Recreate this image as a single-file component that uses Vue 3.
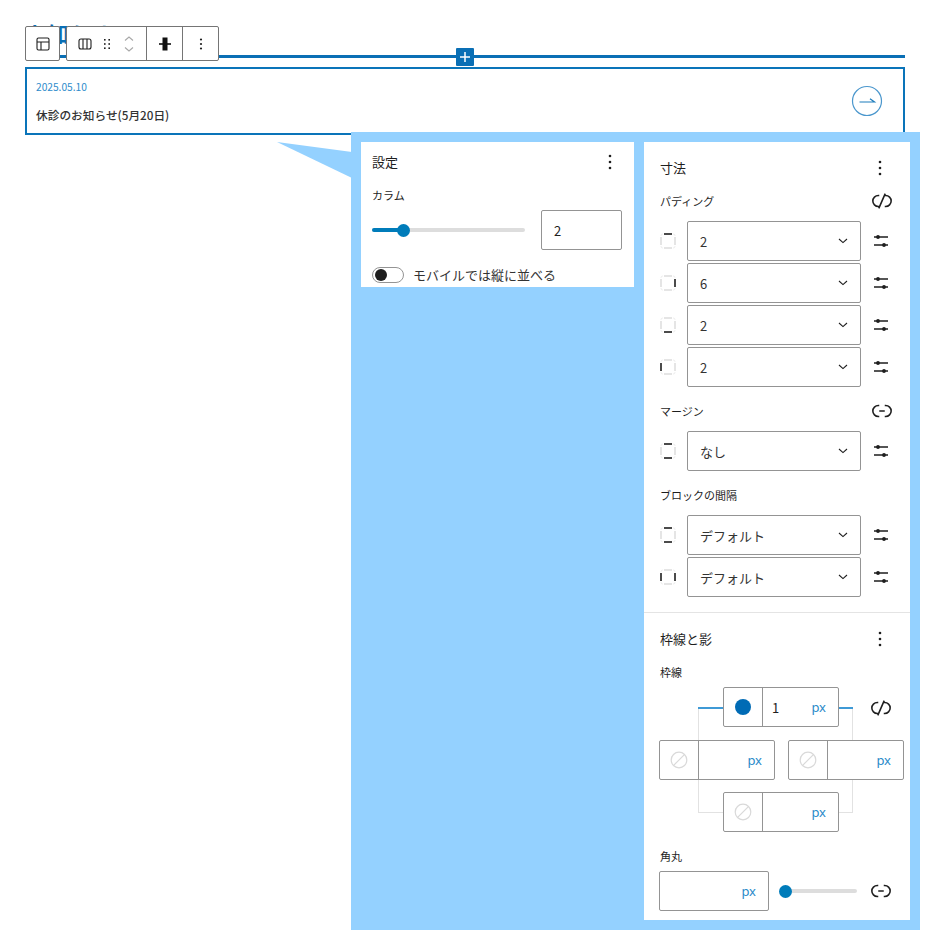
<script setup>
const paddingRows = [
  { sides: ['top'], value: '2' },
  { sides: ['right'], value: '6' },
  { sides: ['bottom'], value: '2' },
  { sides: ['left'], value: '2' },
]
const marginRows = [{ sides: ['top', 'bottom'], value: 'なし' }]
const gapRows = [
  { sides: ['top', 'bottom'], value: 'デフォルト' },
  { sides: ['left', 'right'], value: 'デフォルト' },
]
const sideLines = {
  top: 'M4 1H12',
  bottom: 'M4 15H12',
  left: 'M1 4V12',
  right: 'M15 4V12',
}
const sideNames = ['top', 'right', 'bottom', 'left']
</script>

<template>
  <div class="page">
    <h2 class="heading">お知らせ</h2>
    <div class="inserter">
      <span class="plus">
        <svg width="12" height="12" viewBox="0 0 12 12"><path d="M6 1V11M1 6H11" stroke="#fff" stroke-width="1.5" /></svg>
      </span>
    </div>
    <div class="post">
      <div class="post-text">
        <div class="date">2025.05.10</div>
        <div class="title">休診のお知らせ(5月20日)</div>
      </div>
      <svg class="arrow" width="32" height="32" viewBox="0 0 32 32" fill="none">
        <circle cx="16" cy="16" r="14.5" stroke="#4b97cd" stroke-width="1.2" />
        <path d="M8.5 17H23.5L19 13.8" stroke="#1d7cbc" stroke-width="1.2" />
      </svg>
    </div>

    <div class="toolbar">
      <div class="tool-group">
        <button class="tool wide35">
          <svg width="14" height="14" viewBox="0 0 14 14" fill="none" stroke="#1e1e1e" stroke-width="1.1">
            <rect x="1" y="1" width="12" height="12" rx="1.5" /><path d="M1 5H13M5 5V13" />
          </svg>
        </button>
      </div>
      <div class="tool-group">
        <div class="tool movers">
          <svg width="14" height="12" viewBox="0 0 14 12" fill="none" stroke="#1e1e1e" stroke-width="1.1">
            <rect x="1" y="1" width="12" height="10" rx="2" /><path d="M5 1V11M9 1V11" />
          </svg>
          <svg class="drag" width="8" height="12" viewBox="0 0 8 12" fill="#1e1e1e">
            <rect x="1" y="1" width="1.6" height="1.6" /><rect x="5.4" y="1" width="1.6" height="1.6" />
            <rect x="1" y="5.2" width="1.6" height="1.6" /><rect x="5.4" y="5.2" width="1.6" height="1.6" />
            <rect x="1" y="9.4" width="1.6" height="1.6" /><rect x="5.4" y="9.4" width="1.6" height="1.6" />
          </svg>
          <svg class="chev" width="10" height="16" viewBox="0 0 10 16" fill="none" stroke="#a8a8a8" stroke-width="1.1">
            <path d="M1 4.5L5 1L9 4.5M1 11.5L5 15L9 11.5" />
          </svg>
        </div>
        <button class="tool wide36 sep">
          <svg width="14" height="14" viewBox="0 0 14 14">
            <rect x="4.5" y="0.5" width="5" height="13" fill="#111" /><rect x="1" y="6.2" width="12" height="1.6" fill="#111" />
          </svg>
        </button>
        <button class="tool wide36 sep">
          <svg width="4" height="14" viewBox="0 0 4 14" fill="#1e1e1e">
            <circle cx="2" cy="2.5" r="1.1" /><circle cx="2" cy="7" r="1.1" /><circle cx="2" cy="11.5" r="1.1" />
          </svg>
        </button>
      </div>
    </div>

    <svg class="callout" width="76" height="40" viewBox="0 0 76 40">
      <polygon points="0,1 75,11 75,37" fill="#94d1ff" />
    </svg>

    <div class="overlay">
      <section class="panel settings">
        <div class="panel-head">
          <h3>設定</h3>
          <svg class="kebab" width="4" height="16" viewBox="0 0 4 16" fill="#1e1e1e">
            <circle cx="2" cy="2" r="1.3" /><circle cx="2" cy="8" r="1.3" /><circle cx="2" cy="14" r="1.3" />
          </svg>
        </div>
        <div class="label col-label">カラム</div>
        <div class="col-row">
          <div class="range range-col"><span class="fill"></span><span class="thumb"></span></div>
          <div class="number">2</div>
        </div>
        <div class="toggle-row">
          <span class="toggle"><span class="knob"></span></span>
          <span class="toggle-label">モバイルでは縦に並べる</span>
        </div>
      </section>

      <section class="panel dims">
        <div class="block-part">
          <div class="panel-head">
            <h3>寸法</h3>
            <svg class="kebab" width="4" height="16" viewBox="0 0 4 16" fill="#1e1e1e">
              <circle cx="2" cy="2" r="1.3" /><circle cx="2" cy="8" r="1.3" /><circle cx="2" cy="14" r="1.3" />
            </svg>
          </div>

          <div class="label-row first">
            <span class="label">パディング</span>
            <svg class="link" width="22" height="22" viewBox="0 0 24 24" fill="none" stroke="#1e1e1e" stroke-width="1.7">
              <path d="M9 6H8a6 6 0 0 0 0 12h1M15 6h1a6 6 0 0 1 0 12h-1M15.5 4L8.5 20" />
            </svg>
          </div>
          <div class="rows">
            <div v-for="(row, i) in paddingRows" :key="'p' + i" class="row">
              <svg class="side" width="16" height="16" viewBox="0 0 16 16" fill="none">
                <path d="M1 2.8A1.8 1.8 0 0 1 2.8 1M13.2 1A1.8 1.8 0 0 1 15 2.8M15 13.2A1.8 1.8 0 0 1 13.2 15M2.8 15A1.8 1.8 0 0 1 1 13.2" stroke="#ececec" stroke-width="1" />
                <path v-for="name in sideNames" :key="name" :d="sideLines[name]" :stroke="row.sides.includes(name) ? '#1e1e1e' : '#d4d4d4'" :stroke-width="row.sides.includes(name) ? 1.6 : 1.2" />
              </svg>
              <div class="select">
                <span>{{ row.value }}</span>
                <svg width="10" height="6" viewBox="0 0 10 6" fill="none" stroke="#1e1e1e" stroke-width="1.1"><path d="M1 1L5 4.6L9 1" /></svg>
              </div>
              <svg class="tune" width="16" height="14" viewBox="0 0 16 14" fill="none" stroke="#1e1e1e" stroke-width="1.3">
                <path d="M1 3H15M1 11H15" /><circle cx="5" cy="3" r="1.9" fill="#1e1e1e" stroke="none" /><circle cx="11" cy="11" r="1.9" fill="#1e1e1e" stroke="none" />
              </svg>
            </div>
          </div>

          <div class="label-row margin">
            <span class="label">マージン</span>
            <svg class="link" width="22" height="22" viewBox="0 0 24 24" fill="none" stroke="#1e1e1e" stroke-width="1.7">
              <path d="M9 6H8a6 6 0 0 0 0 12h1M15 6h1a6 6 0 0 1 0 12h-1M9 12h6" />
            </svg>
          </div>
          <div class="rows">
            <div v-for="(row, i) in marginRows" :key="'m' + i" class="row">
              <svg class="side" width="16" height="16" viewBox="0 0 16 16" fill="none">
                <path d="M1 2.8A1.8 1.8 0 0 1 2.8 1M13.2 1A1.8 1.8 0 0 1 15 2.8M15 13.2A1.8 1.8 0 0 1 13.2 15M2.8 15A1.8 1.8 0 0 1 1 13.2" stroke="#ececec" stroke-width="1" />
                <path v-for="name in sideNames" :key="name" :d="sideLines[name]" :stroke="row.sides.includes(name) ? '#1e1e1e' : '#d4d4d4'" :stroke-width="row.sides.includes(name) ? 1.6 : 1.2" />
              </svg>
              <div class="select">
                <span>{{ row.value }}</span>
                <svg width="10" height="6" viewBox="0 0 10 6" fill="none" stroke="#1e1e1e" stroke-width="1.1"><path d="M1 1L5 4.6L9 1" /></svg>
              </div>
              <svg class="tune" width="16" height="14" viewBox="0 0 16 14" fill="none" stroke="#1e1e1e" stroke-width="1.3">
                <path d="M1 3H15M1 11H15" /><circle cx="5" cy="3" r="1.9" fill="#1e1e1e" stroke="none" /><circle cx="11" cy="11" r="1.9" fill="#1e1e1e" stroke="none" />
              </svg>
            </div>
          </div>

          <div class="label-row gap">
            <span class="label">ブロックの間隔</span>
          </div>
          <div class="rows">
            <div v-for="(row, i) in gapRows" :key="'g' + i" class="row">
              <svg class="side" width="16" height="16" viewBox="0 0 16 16" fill="none">
                <path d="M1 2.8A1.8 1.8 0 0 1 2.8 1M13.2 1A1.8 1.8 0 0 1 15 2.8M15 13.2A1.8 1.8 0 0 1 13.2 15M2.8 15A1.8 1.8 0 0 1 1 13.2" stroke="#ececec" stroke-width="1" />
                <path v-for="name in sideNames" :key="name" :d="sideLines[name]" :stroke="row.sides.includes(name) ? '#1e1e1e' : '#d4d4d4'" :stroke-width="row.sides.includes(name) ? 1.6 : 1.2" />
              </svg>
              <div class="select">
                <span>{{ row.value }}</span>
                <svg width="10" height="6" viewBox="0 0 10 6" fill="none" stroke="#1e1e1e" stroke-width="1.1"><path d="M1 1L5 4.6L9 1" /></svg>
              </div>
              <svg class="tune" width="16" height="14" viewBox="0 0 16 14" fill="none" stroke="#1e1e1e" stroke-width="1.3">
                <path d="M1 3H15M1 11H15" /><circle cx="5" cy="3" r="1.9" fill="#1e1e1e" stroke="none" /><circle cx="11" cy="11" r="1.9" fill="#1e1e1e" stroke="none" />
              </svg>
            </div>
          </div>
        </div>

        <div class="block-part border-part">
          <div class="panel-head">
            <h3>枠線と影</h3>
            <svg class="kebab" width="4" height="16" viewBox="0 0 4 16" fill="#1e1e1e">
              <circle cx="2" cy="2" r="1.3" /><circle cx="2" cy="8" r="1.3" /><circle cx="2" cy="14" r="1.3" />
            </svg>
          </div>
          <div class="label border-label">枠線</div>

          <div class="border-box">
            <span class="conn conn-tl"></span>
            <span class="conn conn-tr"></span>
            <span class="conn conn-bl"></span>
            <span class="conn conn-br"></span>
            <span class="conn-blue blue-l"></span>
            <span class="conn-blue blue-r"></span>

            <div class="bc-line center">
              <div class="bc">
                <span class="bc-swatch"><i class="dot"></i></span>
                <span class="bc-val"><b>1</b><em>px</em></span>
              </div>
              <svg class="link bc-link" width="22" height="22" viewBox="0 0 24 24" fill="none" stroke="#1e1e1e" stroke-width="1.7">
                <path d="M9 6H8a6 6 0 0 0 0 12h1M15 6h1a6 6 0 0 1 0 12h-1M15.5 4L8.5 20" />
              </svg>
            </div>
            <div class="bc-line between">
              <div v-for="n in 2" :key="n" class="bc">
                <span class="bc-swatch">
                  <svg width="18" height="18" viewBox="0 0 18 18" fill="none" stroke="#d9d9d9" stroke-width="1.2"><circle cx="9" cy="9" r="7.8" /><path d="M3.6 14.4L14.4 3.6" /></svg>
                </span>
                <span class="bc-val"><b></b><em>px</em></span>
              </div>
            </div>
            <div class="bc-line center">
              <div class="bc">
                <span class="bc-swatch">
                  <svg width="18" height="18" viewBox="0 0 18 18" fill="none" stroke="#d9d9d9" stroke-width="1.2"><circle cx="9" cy="9" r="7.8" /><path d="M3.6 14.4L14.4 3.6" /></svg>
                </span>
                <span class="bc-val"><b></b><em>px</em></span>
              </div>
            </div>
          </div>

          <div class="label radius-label">角丸</div>
          <div class="radius-row">
            <div class="radius-input"><em>px</em></div>
            <div class="range range-radius"><span class="thumb"></span></div>
            <svg class="link radius-link" width="22" height="22" viewBox="0 0 24 24" fill="none" stroke="#1e1e1e" stroke-width="1.7">
              <path d="M9 6H8a6 6 0 0 0 0 12h1M15 6h1a6 6 0 0 1 0 12h-1M9 12h6" />
            </svg>
          </div>
        </div>
      </section>
    </div>
  </div>
</template>

<style scoped>
.page {
  position: relative;
  width: 934px;
  height: 944px;
  background: #fff;
  overflow: hidden;
  font-family: "Noto Sans CJK JP", "Noto Sans", sans-serif;
  color: #1e1e1e;
  padding: 17px 29px 0 25px;
  box-sizing: border-box;
}
.heading {
  margin: 0 0 0 2px;
  height: 34px;
  font-size: 21px;
  line-height: 33px;
  font-weight: 700;
  color: #0a6fb5;
}
.inserter {
  position: relative;
  height: 3px;
  margin-top: 4px;
  background: #0a6fb5;
  display: flex;
  justify-content: center;
  align-items: center;
}
.plus {
  width: 18px;
  height: 18px;
  background: #0a6fb5;
  border-radius: 1px;
  display: flex;
  align-items: center;
  justify-content: center;
}
.post {
  margin-top: 9px;
  height: 68px;
  box-sizing: border-box;
  border: 2px solid #0a74b9;
  display: flex;
  align-items: center;
  justify-content: space-between;
  padding: 0 20px 0 9px;
}
.post-text {
  display: flex;
  flex-direction: column;
  gap: 12px;
}
.date {
  font-size: 10.2px;
  line-height: 16px;
  color: #2f8ccb;
}
.title {
  font-size: 11.7px;
  line-height: 16px;
  font-weight: 500;
  color: #333;
}

.toolbar {
  position: absolute;
  left: 25px;
  top: 26px;
  display: flex;
  gap: 6px;
}
.tool-group {
  display: flex;
  height: 35px;
  box-sizing: border-box;
  border: 1px solid #757575;
  border-radius: 2px;
  background: #fff;
}
.tool {
  padding: 0;
  border: 0;
  background: none;
  display: flex;
  align-items: center;
  justify-content: center;
  height: 33px;
}
.wide35 {
  width: 33px;
}
.wide36 {
  width: 36px;
}
.sep {
  border-left: 1px solid #757575;
}
.movers {
  width: 79px;
  justify-content: flex-start;
  padding-left: 11px;
  box-sizing: border-box;
}
.drag {
  margin-left: 11px;
}
.chev {
  margin-left: 13px;
}

.callout {
  position: absolute;
  left: 277px;
  top: 141px;
}
.overlay {
  position: absolute;
  left: 351px;
  top: 132px;
  width: 569px;
  height: 798px;
  background: #94d1ff;
  padding: 10px;
  box-sizing: border-box;
  display: flex;
  align-items: flex-start;
  gap: 10px;
}
.panel {
  background: #fff;
}
.settings {
  width: 273px;
  height: 145px;
  padding: 0 12px 0 11px;
  box-sizing: border-box;
  flex: none;
}
.dims {
  width: 266px;
  height: 778px;
  flex: none;
}
.block-part {
  padding: 0 16px;
}
.border-part {
  border-top: 1px solid #e4e4e4;
  margin-top: 15px;
  padding-right: 0;
}
.panel-head {
  display: flex;
  align-items: center;
  justify-content: space-between;
}
.panel-head h3 {
  margin: 0;
  font-size: 13px;
  line-height: 20px;
  font-weight: 400;
}
.settings .panel-head {
  height: 40px;
  padding-right: 10px;
}
.dims .panel-head {
  height: 52px;
  padding-right: 12px;
}
.kebab {
  display: block;
}
.label {
  font-size: 11px;
  line-height: 16px;
  font-weight: 400;
}
.col-label {
  margin-top: 5px;
}
.col-row {
  display: flex;
  align-items: center;
  justify-content: space-between;
  margin-top: 7px;
}
.range {
  position: relative;
  height: 4px;
  border-radius: 2px;
  background: #ddd;
}
.range-col {
  width: 153px;
}
.fill {
  position: absolute;
  left: 0;
  top: 0;
  height: 4px;
  width: 31px;
  border-radius: 2px;
  background: #007cba;
}
.thumb {
  position: absolute;
  width: 13px;
  height: 13px;
  border-radius: 50%;
  background: #007cba;
  top: -4.5px;
  left: 25px;
}
.number {
  width: 81px;
  height: 40px;
  box-sizing: border-box;
  border: 1px solid #949494;
  border-radius: 2px;
  padding-left: 12px;
  display: flex;
  align-items: center;
  font-size: 13px;
}
.toggle-row {
  margin-top: 16px;
  display: flex;
  align-items: center;
  gap: 9px;
}
.toggle {
  width: 32px;
  height: 16px;
  box-sizing: border-box;
  border: 1px solid #949494;
  border-radius: 8px;
  display: flex;
  align-items: center;
  padding-left: 2px;
}
.knob {
  width: 12px;
  height: 12px;
  border-radius: 50%;
  background: #1e1e1e;
}
.toggle-label {
  font-size: 13px;
  line-height: 18px;
  color: #333;
}

.label-row {
  display: flex;
  align-items: center;
  justify-content: space-between;
  height: 20px;
  padding-right: 1px;
}
.label-row.first {
  margin-top: -3px;
}
.label-row.margin {
  margin-top: 14px;
}
.label-row.gap {
  margin-top: 14px;
}
.link {
  display: block;
}
.rows {
  margin-top: 10px;
  display: flex;
  flex-direction: column;
  gap: 2px;
}
.row {
  display: flex;
  align-items: center;
  height: 40px;
}
.side {
  flex: none;
  margin-right: 11px;
}
.select {
  width: 174px;
  height: 40px;
  box-sizing: border-box;
  border: 1px solid #949494;
  border-radius: 2px;
  padding: 0 12px 0 12px;
  display: flex;
  align-items: center;
  justify-content: space-between;
  font-size: 13px;
  color: #333;
  flex: none;
}
.tune {
  margin-left: 12px;
  flex: none;
}
.border-label {
  margin-top: 0;
  height: 16px;
}
.border-part .panel-head {
  height: 51px;
  padding-right: 28px;
}
.border-box {
  position: relative;
  width: 245px;
  margin: 7px 0 0 -1px;
  display: flex;
  flex-direction: column;
  gap: 12px;
}
.bc-line {
  position: relative;
  display: flex;
  height: 40px;
}
.bc-line.center {
  justify-content: flex-start;
  padding-left: 64px;
}
.bc-line.between {
  justify-content: space-between;
  margin-top: 1px;
}
.bc {
  position: relative;
  width: 116px;
  height: 40px;
  box-sizing: border-box;
  border: 1px solid #949494;
  border-radius: 2px;
  display: flex;
  background: #fff;
}
.bc-swatch {
  width: 39px;
  box-sizing: border-box;
  border-right: 1px solid #949494;
  display: flex;
  align-items: center;
  justify-content: center;
  flex: none;
}
.dot {
  width: 16px;
  height: 16px;
  border-radius: 50%;
  background: #006bb5;
}
.bc-val {
  flex: 1;
  display: flex;
  align-items: center;
  justify-content: space-between;
  padding: 0 12px 0 9px;
  font-size: 13px;
}
.bc-val b {
  font-weight: 400;
}
em {
  font-style: normal;
  font-size: 13px;
  color: #2a8ac9;
  font-family: "Noto Sans", sans-serif;
}
.bc-link {
  position: absolute;
  left: 211px;
  top: 10px;
}
.conn,
.conn-blue {
  position: absolute;
  display: block;
}
.conn-blue {
  height: 2px;
  top: 20px;
  background: #3f9ad6;
}
.blue-l {
  left: 39px;
  width: 25px;
}
.blue-r {
  left: 180px;
  width: 14px;
}
.conn {
  border: 0 solid #e2e2e2;
}
.conn-tl {
  left: 39px;
  top: 22px;
  width: 0;
  height: 31px;
  border-left-width: 1px;
}
.conn-tr {
  left: 193px;
  top: 22px;
  width: 0;
  height: 31px;
  border-left-width: 1px;
}
.conn-bl {
  left: 39px;
  top: 93px;
  width: 25px;
  height: 33px;
  border-left-width: 1px;
  border-bottom-width: 1px;
  box-sizing: border-box;
}
.conn-br {
  left: 180px;
  top: 93px;
  width: 14px;
  height: 33px;
  border-right-width: 1px;
  border-bottom-width: 1px;
  box-sizing: border-box;
}
.radius-label {
  margin-top: 16px;
}
.radius-row {
  margin: 7px 0 0 -1px;
  display: flex;
  align-items: center;
}
.radius-input {
  width: 110px;
  height: 40px;
  box-sizing: border-box;
  border: 1px solid #949494;
  border-radius: 2px;
  display: flex;
  align-items: center;
  justify-content: flex-end;
  padding-right: 12px;
}
.range-radius {
  width: 72px;
  margin-left: 16px;
}
.range-radius .thumb {
  left: -6px;
}
.radius-link {
  margin-left: 13px;
}
</style>
